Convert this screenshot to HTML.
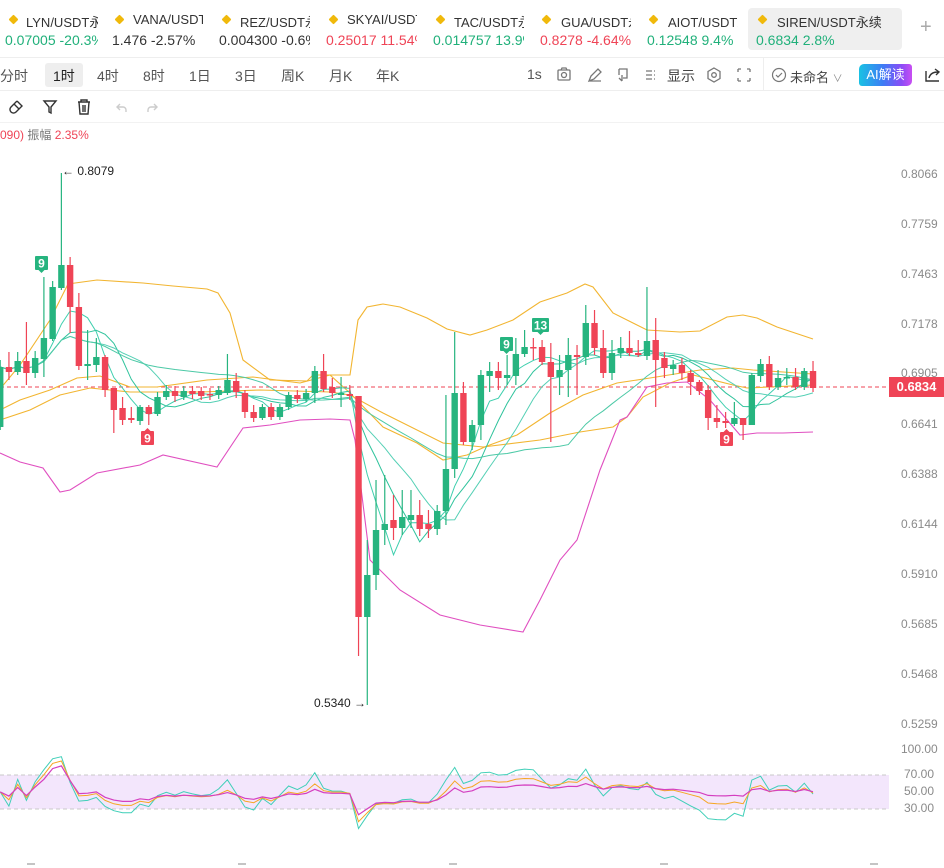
<!DOCTYPE html>
<html><head><meta charset="utf-8">
<style>
*{margin:0;padding:0;box-sizing:border-box}
body{width:944px;height:868px;overflow:hidden;background:#fff;font-family:"Liberation Sans","Noto Sans CJK SC",sans-serif;position:relative;color:#333}
.a{position:absolute;white-space:nowrap}
.g{color:#20b07a}.r{color:#ef4456}
.nm{font-size:13px;color:#333;top:12px}
.vl{font-size:14px;top:32px}
.dot{position:absolute;top:16px;width:7px;height:7px;transform:rotate(45deg);background:#f0b90b;border-radius:1px}
.tb{font-size:14px;color:#555;top:66px}
.yl{font-size:12px;color:#8a8a8a;left:901px}
</style></head><body>
<!-- tabs -->
<div class="a" style="left:748px;top:8px;width:154px;height:42px;background:#efefef;border-radius:4px"></div>
<div class="dot" style="left:10px"></div><div class="a nm" style="left:26px;width:72px;overflow:hidden">LYN/USDT永续</div><div class="a vl g" style="left:5px;width:93px;overflow:hidden">0.07005 -20.3%</div>
<div class="dot" style="left:116px"></div><div class="a nm" style="left:133px;width:70px;overflow:hidden">VANA/USDT</div><div class="a vl" style="left:112px;color:#333">1.476 -2.57%</div>
<div class="dot" style="left:223px"></div><div class="a nm" style="left:240px;width:70px;overflow:hidden">REZ/USDT永续</div><div class="a vl" style="left:219px;width:91px;overflow:hidden;color:#333">0.004300 -0.6%</div>
<div class="dot" style="left:330px"></div><div class="a nm" style="left:347px;width:70px;overflow:hidden">SKYAI/USDT</div><div class="a vl r" style="left:326px;width:91px;overflow:hidden">0.25017 11.54%</div>
<div class="dot" style="left:437px"></div><div class="a nm" style="left:454px;width:70px;overflow:hidden">TAC/USDT永续</div><div class="a vl g" style="left:433px;width:91px;overflow:hidden">0.014757 13.9%</div>
<div class="dot" style="left:543px"></div><div class="a nm" style="left:561px;width:70px;overflow:hidden">GUA/USDT永续</div><div class="a vl r" style="left:540px;width:91px;overflow:hidden">0.8278 -4.64%</div>
<div class="dot" style="left:650px"></div><div class="a nm" style="left:668px;width:70px;overflow:hidden">AIOT/USDT永续</div><div class="a vl g" style="left:647px">0.12548 9.4%</div>
<div class="dot" style="left:759px"></div><div class="a nm" style="left:777px">SIREN/USDT永续</div><div class="a vl g" style="left:756px">0.6834 2.8%</div>
<div class="a" style="left:920px;top:16px;font-size:20px;color:#aaa">+</div>
<div class="a" style="left:0;top:57px;width:944px;height:1px;background:#eee"></div>
<!-- toolbar -->
<div class="a" style="left:45px;top:63px;width:38px;height:24px;background:#eee;border-radius:3px"></div>
<div class="a tb" style="left:0">分时</div><div class="a tb" style="left:53px;color:#222">1时</div><div class="a tb" style="left:97px">4时</div><div class="a tb" style="left:143px">8时</div><div class="a tb" style="left:189px">1日</div><div class="a tb" style="left:235px">3日</div><div class="a tb" style="left:281px">周K</div><div class="a tb" style="left:329px">月K</div><div class="a tb" style="left:376px">年K</div>
<div class="a tb" style="left:527px">1s</div>
<svg class="a" style="left:555px;top:66px" width="200" height="18" fill="none" stroke="#777" stroke-width="1.3">
<rect x="3" y="4" width="12" height="10" rx="1"/><circle cx="9" cy="9" r="2.5"/><path d="M6 4l1-2h4l1 2"/>
<path d="M34 15l2-5 7-7 3 3-7 7zM34 15h12"/>
<path d="M64 3h8v9h-4M64 3v6M64 12l3 3M67 9v6"/>
<path d="M91 5h6M91 9h6M91 13h6M99 5h1M99 9h1M99 13h1"/>
<path d="M159 2l6 3.5v7L159 16l-6-3.5v-7z"/><circle cx="159" cy="9" r="2.3"/>
<path d="M183 3h3M183 3v3M195 3h-3M195 3v3M183 15h3M183 15v-3M195 15h-3M195 15v-3"/>
</svg>
<div class="a tb" style="left:667px;color:#444">显示</div>
<div class="a" style="left:763px;top:58px;width:1px;height:32px;background:#eee"></div>
<svg class="a" style="left:771px;top:67px" width="16" height="16" fill="none" stroke="#777" stroke-width="1.2"><circle cx="8" cy="8" r="6.5"/><path d="M5 8l2 2 4-4"/></svg>
<div class="a" style="left:790px;top:67px;font-size:13px;color:#444">未命名 <span style="font-size:10px;color:#888">∨</span></div>
<div class="a" style="left:859px;top:64px;width:53px;height:22px;border-radius:5px 3px 5px 3px;background:linear-gradient(90deg,#19c2e3,#3d7cf5 45%,#8a4cf6 80%,#c94ef2);color:#fff;font-size:13px;text-align:center;line-height:22px">AI解读</div>
<svg class="a" style="left:924px;top:66px" width="18" height="18" fill="none" stroke="#333" stroke-width="1.4"><path d="M2 5v10h13M5 12c1-4 4-6 9-6M11 3l4 3-3 3"/></svg>
<div class="a" style="left:0;top:90px;width:944px;height:1px;background:#eee"></div>
<!-- tools row -->
<svg class="a" style="left:8px;top:98px" width="160" height="18" fill="none" stroke="#333" stroke-width="1.4">
<path d="M9 3l5 5-6 6a3 3 0 01-5-5l6-6M6 6l5 5"/>
<path d="M36 3h12l-5 6v6l-2-1V9z"/>
<path d="M70 4h12M73 4v-2h6v2M71 4l1 12h8l1-12M75 7v7M77 7v7"/>
<path d="M112 6l-3 3 3 3M109 9h6a3 3 0 013 3v2" stroke="#ccc"/>
<path d="M146 6l3 3-3 3M149 9h-6a3 3 0 00-3 3v2" stroke="#ccc"/>
</svg>
<div class="a" style="left:0;top:122px;width:944px;height:1px;background:#f2f2f2"></div>
<div class="a" style="left:0;top:126px;font-size:12px"><span class="r">090)</span> <span style="color:#777">振幅</span> <span class="r">2.35%</span></div>
<!-- y labels -->
<div class="a yl" style="top:167px">0.8066</div><div class="a yl" style="top:217px">0.7759</div><div class="a yl" style="top:267px">0.7463</div><div class="a yl" style="top:317px">0.7178</div><div class="a yl" style="top:366px">0.6905</div><div class="a yl" style="top:417px">0.6641</div><div class="a yl" style="top:467px">0.6388</div><div class="a yl" style="top:517px">0.6144</div><div class="a yl" style="top:567px">0.5910</div><div class="a yl" style="top:617px">0.5685</div><div class="a yl" style="top:667px">0.5468</div><div class="a yl" style="top:717px">0.5259</div>
<div class="a yl" style="top:742px">100.00</div><div class="a yl" style="top:767px;left:904px">70.00</div><div class="a yl" style="top:784px;left:904px">50.00</div><div class="a yl" style="top:801px;left:904px">30.00</div>
<div class="a" style="left:889px;top:377px;width:55px;height:20px;background:#ef4456;color:#fff;font-size:13px;font-weight:bold;line-height:20px;text-align:center">0.6834</div>
<div class="a" style="left:62px;top:164px;font-size:12px;color:#222">← 0.8079</div>
<div class="a" style="left:314px;top:696px;font-size:12px;color:#222">0.5340 →</div>
<svg id="c" class="a" style="left:0;top:0" width="944" height="868"></svg>
<script>
var D=[[427,367,360,430],[367,372,352,380],[372,361,352,375],[361,373,322,385],[373,358,351,378],[359,338,277,377],[339,287,281,341],[288,265,173,290],[265,307,257,333],[307,366,293,370],[366,364,330,380],[365,357,338,372],[357,390,355,397],[388,410,388,433],[408,420,397,425],[418,420,407,423],[421,407,405,425],[407,414,405,425],[414,397,392,416],[397,391,385,400],[391,396,386,402],[397,391,386,400],[391,394,386,399],[391,396,387,400],[394,395,388,400],[395,390,386,399],[393,380,354,395],[381,392,373,398],[393,412,390,418],[412,418,405,422],[418,407,404,420],[407,417,403,420],[417,407,404,420],[407,395,392,410],[395,399,390,403],[399,393,389,402],[393,371,366,403],[371,389,354,392],[387,393,378,398],[395,393,377,407],[394,396,385,400],[396,617,396,656],[617,575,540,705],[575,530,480,590],[530,524,475,545],[520,528,495,540],[528,517,490,535],[520,515,490,528],[515,529,500,536],[524,529,510,538],[529,511,505,535],[511,469,395,525],[469,393,332,478],[393,442,382,445],[442,425,420,450],[425,375,370,440],[376,371,362,392],[371,378,362,390],[378,375,355,385],[376,354,338,385],[354,347,330,357],[347,348,338,360],[347,362,340,365],[362,377,343,442],[377,370,355,395],[370,355,338,397],[355,357,345,395],[357,323,305,365],[323,348,310,355],[348,373,330,378],[373,353,340,380],[353,348,337,358],[348,353,331,356],[353,355,340,357],[356,341,287,360],[340,360,318,407],[358,368,352,378],[369,365,360,375],[365,373,358,380],[373,382,370,395],[382,391,380,395],[390,418,385,430],[418,422,405,428],[421,423,412,428],[424,418,402,426],[418,425,418,440],[425,375,373,425],[376,364,359,382],[364,387,356,390],[387,378,370,390],[378,377,368,385],[377,387,368,390],[387,371,368,390],[371,388,361,392]];
var G='#26b47f',R='#ef4456',s='';
function X(i){return 0.2+i*8.74}
function pl(p,c,w){return '<polyline fill="none" stroke="'+c+'" stroke-width="'+(w||1.1)+'" points="'+p+'"/>'}
// RSI band
s+='<rect x="0" y="775" width="889" height="34" fill="#f3e6fc"/>';
s+='<line x1="0" y1="775" x2="889" y2="775" stroke="#c8c8c8" stroke-dasharray="4 3"/><line x1="0" y1="809" x2="889" y2="809" stroke="#c8c8c8" stroke-dasharray="4 3"/>';
[27,238,449,660,870].forEach(function(x){s+='<line x1="'+x+'" y1="864" x2="'+(x+8)+'" y2="864" stroke="#888"/>'});
s+='<line x1="0" y1="387" x2="889" y2="387" stroke="#ef4456" stroke-dasharray="4 3"/>';
// bands
s+=pl('0,389 20,365 50,320 68,284 97,280 143,283 173,286 207,289 218,293 230,313 243,360 270,380 307,381 313,375 350,375 358,320 367,307 383,304 400,307 427,318 447,329 470,335 487,330 513,320 540,302 567,293 585,284 593,287 613,313 633,323 647,330 680,332 700,331 727,317 743,315 757,318 777,327 813,339','#f2b531');
s+=pl('0,410 20,400 50,390 77,378 100,376 130,387 157,387 207,380 253,377 300,383 330,375 350,393 383,427 417,443 443,460 467,455 487,446 517,435 550,413 583,395 617,383 650,378 700,370 733,368 753,370 783,372 813,374','#f2b531');
s+=pl('0,420 30,410 60,395 90,388 130,392 200,392 260,390 330,392 350,395 383,413 443,443 483,447 540,440 580,432 613,427 627,417 643,397 670,383 693,375 733,385 747,388 813,385','#f2b531');
s+=pl('0,453 20,462 43,468 60,492 70,490 97,473 140,465 163,455 217,467 243,428 270,425 300,420 330,419 350,420 355,440 370,560 400,590 440,615 480,625 523,632 540,600 560,560 577,540 600,470 620,420 627,417 647,387 667,383 687,382 710,400 740,435 757,433 783,433 813,432','#e04fc0');
// MAs of closes
var C=D.map(function(d){return d[1]});
[[5,'#3fcfae'],[8,'#2fc39c'],[12,'#55d0b5'],[25,'#4cc9a6']].forEach(function(m){var n=m[0],p=[];for(var i=0;i<C.length;i++){var a=0,k=0;for(var j=Math.max(0,i-n+1);j<=i;j++){a+=C[j];k++}p.push(X(i).toFixed(1)+','+(a/k).toFixed(1))}s+=pl(p.join(' '),m[1],1)});
// candles
D.forEach(function(d,i){var x=X(i),c=d[1]<d[0]?G:R,t=Math.min(d[0],d[1]),h=Math.max(Math.abs(d[0]-d[1]),1.5);s+='<line x1="'+x+'" y1="'+d[2]+'" x2="'+x+'" y2="'+d[3]+'" stroke="'+c+'" stroke-width="1.2"/><rect x="'+(x-3.2)+'" y="'+t+'" width="6.4" height="'+h+'" fill="'+c+'"/>'});
// markers
function mk(x,y,t,c,w,up){s+='<rect x="'+x+'" y="'+y+'" width="'+w+'" height="14" rx="1" fill="'+c+'"/>';var cx=x+w/2;s+=up?'<path d="M'+(cx-3)+' '+y+'l3 -3 3 3z" fill="'+c+'"/>':'<path d="M'+(cx-3)+' '+(y+14)+'l3 3 3 -3z" fill="'+c+'"/>';s+='<text x="'+cx+'" y="'+(y+11.5)+'" fill="#fff" font-size="12" font-weight="bold" text-anchor="middle" font-family="Liberation Sans">'+t+'</text>'}
mk(35,256,'9',G,13,0);mk(141,431,'9',R,13,1);mk(500,337,'9',G,13,0);mk(532,318,'13',G,17,0);mk(720,432,'9',R,13,1);
// RSI
function rsi(n){var out=[],ag=0,al=0;for(var i=0;i<C.length;i++){var ch=i?C[i-1]-C[i]:0;var g=Math.max(ch,0),l=Math.max(-ch,0);if(i==0){ag=1;al=1}else{ag=(ag*(n-1)+g)/n;al=(al*(n-1)+l)/n}var v=100-100/(1+ag/(al||0.001));out.push(X(i).toFixed(1)+','+(749+(100-v)*0.857).toFixed(1))}return out.join(' ')}
s+=pl(rsi(6),'#3fcfb8',1);s+=pl(rsi(12),'#f5a623',1);s+=pl(rsi(24),'#d43fc0',1.2);
document.getElementById('c').innerHTML=s;
</script>
</body></html>
